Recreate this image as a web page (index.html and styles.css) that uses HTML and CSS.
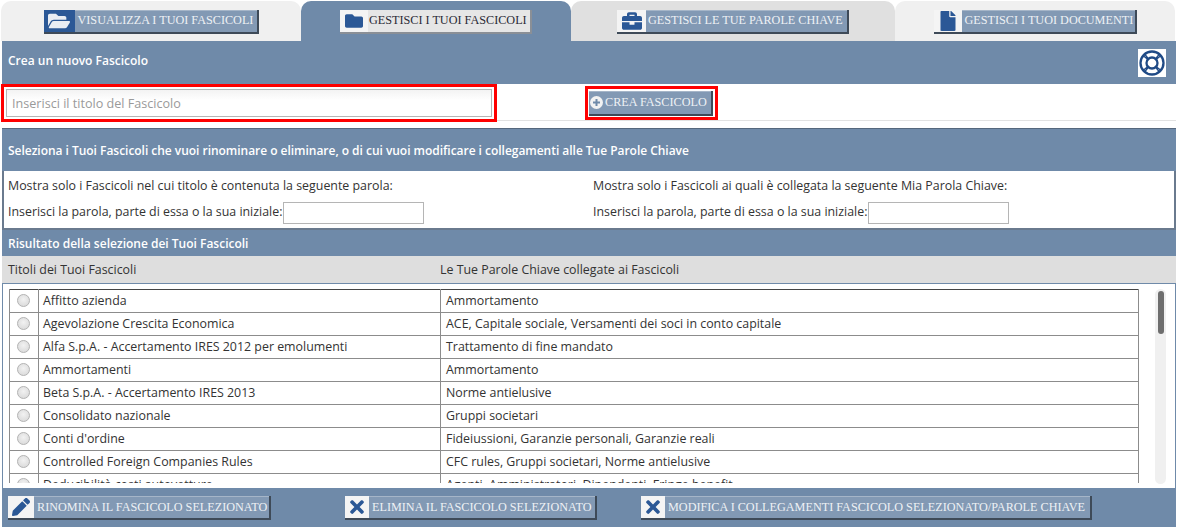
FILE: index.html
```html
<!DOCTYPE html>
<html lang="it">
<head>
<meta charset="utf-8">
<title>Gestisci i tuoi fascicoli</title>
<link rel="stylesheet" href="styles.css">
</head>
<body>
<nav class="tabs">
  <div class="tab tab-1"><a class="btn"><span class="ico"><svg width="22" height="20" viewBox="0 0 576 512"><path d="M572.694 292.093L500.27 416.248A63.997 63.997 0 0 1 444.989 448H45.025c-18.523 0-30.064-20.093-20.731-36.093l72.424-124.155A64 64 0 0 1 152 256h399.964c18.523 0 30.064 20.093 20.73 36.093zM152 224h328v-48c0-26.51-21.49-48-48-48H272l-64-64H48C21.49 64 0 85.49 0 112v278.046l69.077-118.418C86.214 242.25 117.989 224 152 224z"/></svg></span><span class="lbl">VISUALIZZA I TUOI FASCICOLI</span></a></div>
  <div class="tab tab-2 active"><a class="btn"><span class="ico"><svg width="18" height="18" viewBox="0 0 512 512"><path d="M464 128H272l-64-64H48C21.49 64 0 85.49 0 112v288c0 26.51 21.49 48 48 48h416c26.51 0 48-21.49 48-48V176c0-26.51-21.49-48-48-48z"/></svg></span><span class="lbl">GESTISCI I TUOI FASCICOLI</span></a></div>
  <div class="tab tab-3"><a class="btn"><span class="ico"><svg width="20" height="20" viewBox="0 0 512 512"><path d="M320 336c0 8.84-7.16 16-16 16h-96c-8.84 0-16-7.16-16-16v-48H0v144c0 25.6 22.4 48 48 48h416c25.6 0 48-22.4 48-48V288H320v48zm144-208h-80V80c0-25.6-22.4-48-48-48H176c-25.6 0-48 22.4-48 48v48H48c-25.6 0-48 22.4-48 48v80h512v-80c0-25.6-22.4-48-48-48zm-144 0H192V96h128v32z"/></svg></span><span class="lbl">GESTISCI LE TUE PAROLE CHIAVE</span></a></div>
  <div class="tab tab-4"><a class="btn"><span class="ico"><svg width="16" height="20" viewBox="0 0 384 512"><path d="M224 136V0H24C10.7 0 0 10.7 0 24v464c0 13.3 10.7 24 24 24h336c13.3 0 24-10.7 24-24V160H248c-13.2 0-24-10.8-24-24zm160-14.1v6.1H256V0h6.1c6.4 0 12.5 2.5 17 7l97.9 98c4.5 4.5 7 10.6 7 16.9z"/></svg></span><span class="lbl">GESTISCI I TUOI DOCUMENTI</span></a></div>
</nav>

<main class="panel">
  <header class="band band-new">
    <span>Crea un nuovo Fascicolo</span>
    <span class="help"><svg width="26" height="26" viewBox="0 0 26 26" fill="none" stroke="#1f4a86" stroke-width="2.300"><circle cx="13" cy="13" r="11.500"/><circle cx="13" cy="13" r="5.500"/><path d="M5.500 4l4.500 5.500M20.500 4L16 9.500M4 5.500l5.500 4.500M22 5.500L16.500 10M4 20.500L9.500 16M22 20.500L16.500 16M5.500 22l4.500-5.500M20.500 22L16 16.500" stroke-width="1.300"/></svg></span>
  </header>

  <section class="create">
    <div class="mark mark-input"><input class="title-input" type="text" placeholder="Inserisci il titolo del Fascicolo"></div>
    <div class="mark mark-btn"><a class="btn btn-create"><svg class="plus" width="13" height="13" viewBox="0 0 13 13"><circle cx="6.500" cy="6.500" r="6.500" fill="#f2f2f2"/><path d="M6.500 3v7M3 6.500h7" stroke="#6f8aa9" stroke-width="2"/></svg><span class="lbl">CREA FASCICOLO</span></a></div>
  </section>

  <section class="filter">
    <header class="band band-select">Seleziona i Tuoi Fascicoli che vuoi rinominare o eliminare, o di cui vuoi modificare i collegamenti alle Tue Parole Chiave</header>
    <div class="filter-cols">
      <div class="filter-col">
        <p>Mostra solo i Fascicoli nel cui titolo è contenuta la seguente parola:</p>
        <label>Inserisci la parola, parte di essa o la sua iniziale: <input class="small-input" type="text"></label>
      </div>
      <div class="filter-col">
        <p>Mostra solo i Fascicoli ai quali è collegata la seguente Mia Parola Chiave:</p>
        <label>Inserisci la parola, parte di essa o la sua iniziale: <input class="small-input" type="text"></label>
      </div>
    </div>
  </section>

  <header class="band band-result">Risultato della selezione dei Tuoi Fascicoli</header>
  <div class="col-heads"><span class="head-title">Titoli dei Tuoi Fascicoli</span><span>Le Tue Parole Chiave collegate ai Fascicoli</span></div>

  <div class="list">
    <div class="list-clip">
      <table class="rows">
        <tr><td class="r"><i></i></td><td class="t">Affitto azienda</td><td>Ammortamento</td></tr>
        <tr><td class="r"><i></i></td><td class="t">Agevolazione Crescita Economica</td><td>ACE, Capitale sociale, Versamenti dei soci in conto capitale</td></tr>
        <tr><td class="r"><i></i></td><td class="t">Alfa S.p.A. - Accertamento IRES 2012 per emolumenti</td><td>Trattamento di fine mandato</td></tr>
        <tr><td class="r"><i></i></td><td class="t">Ammortamenti</td><td>Ammortamento</td></tr>
        <tr><td class="r"><i></i></td><td class="t">Beta S.p.A. - Accertamento IRES 2013</td><td>Norme antielusive</td></tr>
        <tr><td class="r"><i></i></td><td class="t">Consolidato nazionale</td><td>Gruppi societari</td></tr>
        <tr><td class="r"><i></i></td><td class="t">Conti d'ordine</td><td>Fideiussioni, Garanzie personali, Garanzie reali</td></tr>
        <tr><td class="r"><i></i></td><td class="t">Controlled Foreign Companies Rules</td><td>CFC rules, Gruppi societari, Norme antielusive</td></tr>
        <tr><td class="r"><i></i></td><td class="t">Deducibilità costi autovetture</td><td>Agenti, Amministratori, Dipendenti, Fringe benefit</td></tr>
      </table>
    </div>
    <div class="scroll"><div class="thumb"></div></div>
  </div>

  <footer class="actions">
    <a class="btn act-1"><span class="ico"><svg width="18" height="18" viewBox="0 0 512 512"><path d="M497.9 142.1l-46.1 46.1c-4.7 4.7-12.3 4.7-17 0l-111-111c-4.7-4.7-4.7-12.3 0-17l46.1-46.1c18.7-18.7 49.1-18.7 67.9 0l60.1 60.1c18.8 18.7 18.8 49.1 0 67.9zM284.2 99.8L21.6 362.4.4 483.9c-2.9 16.4 11.4 30.6 27.8 27.8l121.5-21.3 262.6-262.6c4.7-4.7 4.7-12.3 0-17l-111-111c-4.8-4.7-12.4-4.7-17.1 0z"/></svg></span><span class="lbl">RINOMINA IL FASCICOLO SELEZIONATO</span></a>
    <a class="btn act-2"><span class="ico"><svg width="14" height="20" viewBox="0 0 352 512"><path d="M242.72 256l100.07-100.07c12.28-12.28 12.28-32.19 0-44.48l-22.24-22.24c-12.28-12.28-32.19-12.28-44.48 0L176 189.28 75.93 89.21c-12.28-12.28-32.19-12.28-44.48 0L9.21 111.45c-12.28 12.28-12.28 32.19 0 44.48L109.28 256 9.21 356.07c-12.28 12.28-12.28 32.19 0 44.48l22.24 22.24c12.28 12.28 32.2 12.28 44.48 0L176 322.72l100.07 100.07c12.28 12.28 32.2 12.28 44.48 0l22.24-22.24c12.28-12.28 12.28-32.19 0-44.48L242.72 256z"/></svg></span><span class="lbl">ELIMINA IL FASCICOLO SELEZIONATO</span></a>
    <a class="btn act-3"><span class="ico"><svg width="14" height="20" viewBox="0 0 352 512"><path d="M242.72 256l100.07-100.07c12.28-12.28 12.28-32.19 0-44.48l-22.24-22.24c-12.28-12.28-32.19-12.28-44.48 0L176 189.28 75.93 89.21c-12.28-12.28-32.19-12.28-44.48 0L9.21 111.45c-12.28 12.28-12.28 32.19 0 44.48L109.28 256 9.21 356.07c-12.28 12.28-12.28 32.19 0 44.48l22.24 22.24c12.28 12.28 32.2 12.28 44.48 0L176 322.72l100.07 100.07c12.28 12.28 32.2 12.28 44.48 0l22.24-22.24c12.28-12.28 12.28-32.19 0-44.48L242.72 256z"/></svg></span><span class="lbl">MODIFICA I COLLEGAMENTI FASCICOLO SELEZIONATO/PAROLE CHIAVE</span></a>
  </footer>
</main>
</body>
</html>
```
FILE: styles.css
```css
* { box-sizing: border-box; }
html, body { margin: 0; padding: 0; }
body {
  width: 1178px;
  height: 527px;
  overflow: hidden;
  background: #fff;
  font-family: "Open Sans", "Noto Sans", sans-serif;
  font-size: 12.4px;
  color: #333;
}

.tabs { display: flex; height: 41px; padding: 1px 3px 0 1px; }
.tab {
  display: flex;
  align-items: center;
  justify-content: center;
  padding-top: 1px;
  background: #f0f0f0;
  border-radius: 10px 10px 0 0;
}
.tab-1 { width: 300px; }
.tab-2 { width: 270px; }
.tab-3 { width: 324px; background: #e0e0e0; }
.tab-4 { width: 280px; }
.tab.active { background: #6f8aa9; }

.btn {
  display: inline-flex;
  align-items: stretch;
  height: 24px;
  background: #8299b4;
  border-right: 2px solid #3e4a58;
  border-bottom: 2px solid #3e4a58;
  box-shadow: inset 0 1px 0 #a5b5c8;
  font-family: "Liberation Serif", serif;
  font-size: 12.2px;
  color: #eef1f5;
  white-space: nowrap;
}
.btn .ico {
  display: flex;
  align-items: center;
  justify-content: center;
  width: 26px;
  background: #f4f4f4;
  flex: none;
}
.btn .ico svg { fill: #2b5896; }
.btn .lbl { display: flex; align-items: center; padding: 0 5px 0 4px; }

.tab-1 .btn { width: 215px; }
.tab-1 .ico { width: 31px; background: #2b5896; }
.tab-1 .ico svg { fill: #e9edf3; }
.tab-1 .lbl { padding-left: 3px; padding-right: 0; }
.tab-2 .btn { width: 192px; background: #e6e6e6; color: #2a2a35; border-color: #8a8f96; box-shadow: none; }
.tab-2 .ico { width: 28px; }
.tab-2 .lbl { padding-left: 1px; padding-right: 0; }
.tab-3 .btn { width: 232px; }
.tab-3 .ico { width: 29px; }
.tab-3 .lbl { padding-left: 2px; padding-right: 0; }
.tab-4 .btn { width: 203px; }
.tab-4 .ico { width: 28px; }
.tab-4 .lbl { padding-left: 3px; padding-right: 0; }

.panel { margin: 0 2px; }
.band {
  background: #6f8aa9;
  color: #fff;
  font-size: 12px;
  font-weight: 600;
}
.band-new {
  display: flex;
  justify-content: space-between;
  align-items: center;
  height: 43px;
  padding: 0 10px 5px 6px;
}
.help {
  display: flex;
  align-items: center;
  justify-content: center;
  width: 28px;
  height: 28px;
  margin-top: 5px;
  background: #fff;
}

.create {
  display: flex;
  align-items: flex-start;
  height: 44px;
  box-shadow: inset 0 -7px 0 #fff, inset 0 -8px 0 #e2e2e2;
}
.mark { border: 3px solid #f00; background: #fff; }
.mark-input { width: 496px; height: 38px; margin-left: -1px; padding: 2px 3px 2px 2px; }
.title-input {
  display: block;
  width: 486px;
  height: 28px;
  padding: 0 5px;
  border: 1px solid #b5b5b5;
  background: linear-gradient(#f3f3f3, #fff 40%);
  font: inherit;
  font-size: 12.6px;
  outline: none;
}
.title-input::placeholder { color: #9a9a9a; opacity: 1; }
.mark-btn {
  display: flex;
  align-items: center;
  width: 133px;
  height: 34px;
  margin: 2px 0 0 88px;
  padding: 0 0 0 1px;
}
.btn-create { width: 124px; height: 25px; align-items: center; padding-left: 1px; }
.plus { flex: none; }
.btn-create .lbl { padding: 0 0 0 2px; }

.filter { border: solid #6a7a8e; border-width: 0 2px 2px; }
.band-select {
  display: flex;
  align-items: center;
  height: 43px;
  margin: 0 -2px;
  padding: 1px 6px 0;
  border-top: 1px solid #56687d;
  letter-spacing: -0.03px;
}
.filter-cols { display: grid; grid-template-columns: 585px 1fr; height: 57px; padding: 5px 4px 0; }
.filter-col p { margin: 0; height: 26px; line-height: 20px; }
.filter-col label { display: flex; align-items: flex-start; gap: 1px; height: 22px; line-height: 20px; }
.small-input {
  width: 141px;
  height: 22px;
  border: 1px solid #b5b5b5;
  background: #fff;
  outline: none;
}

.band-result {
  display: flex;
  align-items: center;
  height: 26px;
  padding: 0 6px;
}
.col-heads {
  display: flex;
  align-items: center;
  height: 27px;
  padding: 0 6px;
  background: #dedede;
  color: #333;
}
.head-title { width: 432px; }

.list {
  display: flex;
  height: 205px;
  padding: 5px 0 0 6px;
  border: solid #6f8aa9;
  border-width: 1px 1px 0 1px;
  background: #fff;
}
.list-clip { width: 1130px; height: 194px; overflow: hidden; flex: none; }
.rows {
  width: 1130px;
  table-layout: fixed;
  border-collapse: collapse;
  border-top: 1px solid #444;
  border-right: 1px solid #444;
  border-left: 1px solid #444;
}
.rows td {
  height: 23px;
  padding: 0 5px 2px;
  border: 1px solid #8c8c8c;
  border-top: 0;
  white-space: nowrap;
}
.rows td.r { width: 29px; padding: 0; }
.rows td.t { width: 402px; padding-left: 4px; }
.rows i {
  display: block;
  width: 13px;
  height: 13px;
  margin: 0 0 1px 7px;
  border: 1px solid #b4b4b4;
  border-radius: 50%;
  background: radial-gradient(circle at 50% 40%, #f2f2f2, #d5d5d5);
}

.scroll {
  width: 11px;
  height: 195px;
  margin-left: 16px;
  padding: 2px;
  background: #f0f0f0;
  border-radius: 6px;
}
.thumb { width: 6px; height: 43px; background: #6e6e6e; border-radius: 3px; margin: 0 auto; }

.actions {
  display: flex;
  align-items: flex-start;
  height: 39px;
  padding: 8px 0 0 6px;
  background: #6f8aa9;
}
.actions .btn { height: 24px; }
.act-1 { width: 263px; }
.act-2 { width: 252px; margin-left: 74px; }
.act-3 { width: 451px; margin-left: 44px; }
.act-2 .ico, .act-3 .ico { width: 24px; }
.actions .lbl { padding: 0 0 0 3px; }
```
